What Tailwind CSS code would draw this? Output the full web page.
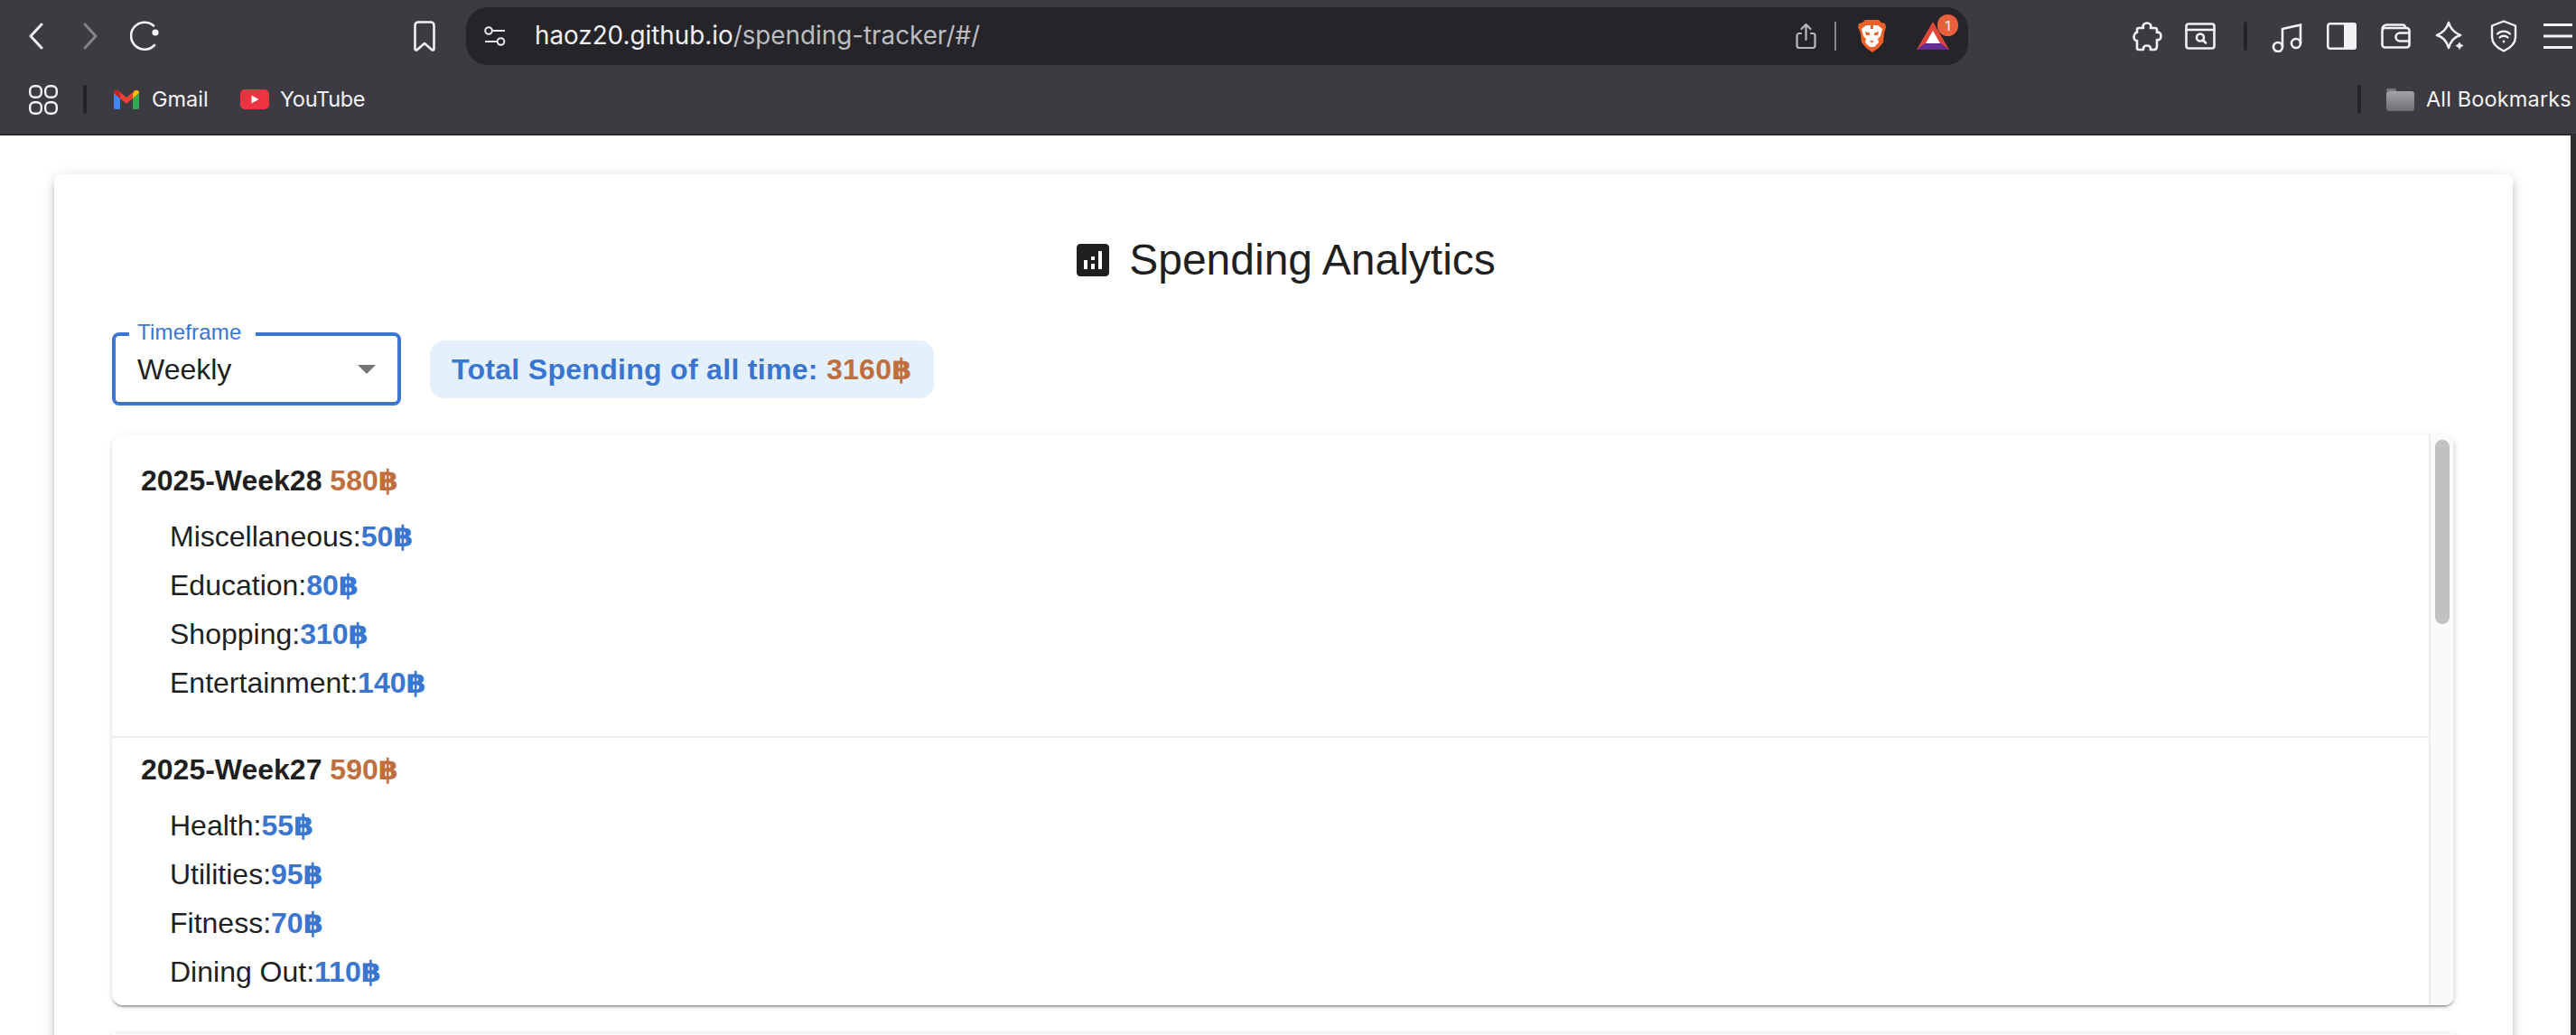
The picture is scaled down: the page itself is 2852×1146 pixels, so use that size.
<!DOCTYPE html>
<html lang="en">
<head>
<meta charset="UTF-8" />
<meta name="viewport" content="width=device-width, initial-scale=1.0" />
<title>Spending Analytics</title>
<script src="https://cdn.jsdelivr.net/npm/@tailwindcss/browser@4"></script>
</head>
<body class="h-[1146px] overflow-hidden bg-white font-['Liberation_Sans','DejaVu_Sans',sans-serif] text-[#1f1f1f]">

<!-- browser toolbar -->
<header class="h-[150px] bg-[#3c3b41] border-b-2 border-[#2a292e] text-[#f2f2f4] font-['Inter',sans-serif]">
    <div class="flex items-center h-[80px] pl-[32px]">
        <svg class="w-[16px] h-[30px]" viewBox="0 0 16 30" fill="none" stroke="#f2f2f4" stroke-width="3" stroke-linecap="round" stroke-linejoin="round"><path d="M14 2 2 15l12 13"/></svg>
        <svg class="w-[16px] h-[30px] ml-[44px]" viewBox="0 0 16 30" fill="none" stroke="#858589" stroke-width="3" stroke-linecap="round" stroke-linejoin="round"><path d="M2 2l12 13L2 28"/></svg>
        <svg class="w-[33px] h-[33px] ml-[36px] mt-[-2px]" viewBox="0 0 33 33" fill="none" stroke="#f2f2f4" stroke-width="2.6" stroke-linecap="round"><path d="M26 5.5A15 15 0 1 0 27 27"/><circle cx="28" cy="13" r="3.6" fill="#f2f2f4" stroke="none"/></svg>
        <svg class="w-[24px] h-[34px] ml-[281px]" viewBox="0 0 24 34" fill="none" stroke="#f2f2f4" stroke-width="2.6" stroke-linejoin="round"><path d="M1.5 5a3.5 3.5 0 0 1 3.5-3.5h14A3.5 3.5 0 0 1 22.5 5v26c0 1.500-1.500 2-2.500 1L12 25l-8 7c-1 1-2.500.5-2.500-1z"/></svg>

        <div class="relative flex items-center w-[1663px] h-[64px] ml-[34px] rounded-[24px] bg-[#252429]">
            <svg class="w-[24px] h-[22px] ml-[20px]" viewBox="0 0 24 22" fill="none" stroke="#e8e8ea" stroke-width="2"><circle cx="5" cy="5" r="3.800"/><path d="M9 5h14M1 17h13"/><circle cx="18.500" cy="17" r="3.800"/></svg>
            <span class="ml-[32px] text-[27.8px] leading-none whitespace-nowrap text-[#f0f0f2]">haoz20.github.io<span class="text-[#bdbdc1]">/spending-tracker/#/</span></span>
            <svg class="w-[23px] h-[30px] ml-auto" viewBox="0 0 23 30" fill="none" stroke="#b9b9bc" stroke-width="2.200" stroke-linecap="round" stroke-linejoin="round"><path d="M6 12H4a2.500 2.500 0 0 0-2.500 2.500v11A2.500 2.500 0 0 0 4 28h15a2.500 2.500 0 0 0 2.500-2.500v-11A2.500 2.500 0 0 0 19 12h-2M11.500 19V2M6.500 7l5-5 5 5"/></svg>
            <div class="w-[2px] h-[32px] ml-[20px] bg-[#87878b]"></div>
            <svg class="w-[31px] h-[36px] ml-[24px]" viewBox="0 0 31 36"><path d="M8 0h15l3 3 4 1 1 4-2 7-1 10-5 6-7 5-7-5-5-6-1-10L0 8l1-4 4-1z" fill="#ee6128"/><path d="M9 6h13l5 4-2 8-3 3 1 4-5 5h-5l-5-5 1-4-3-3-2-8z" fill="#fff"/><path d="M8 13l5 1.500V17H9zM23 13l-5 1.500V17h4zM13 23h5l-2.500 2.500zM15.500 25.500v3M14 6h3v4h-3z" fill="#ee6128"/></svg>
            <div class="relative ml-[34px] mr-[21px] w-[36px] h-[32px]">
                <svg class="w-[36px] h-[32px]" viewBox="0 0 36 32"><path d="M18 0 36 31H0z" fill="#e0473a"/><path d="M0 31 9 24h18l9 7z" fill="#662d91"/><path d="M18 10l8 14H10z" fill="#fff"/></svg>
                <span class="absolute left-[23px] top-[-8px] flex items-center justify-center w-[23px] h-[24px] rounded-full bg-[#e9603f] text-[15px] leading-none text-white">1</span>
            </div>
        </div>

        <svg class="w-[33px] h-[33px] ml-[182px]" viewBox="0 0 33 33" fill="none" stroke="#f2f2f4" stroke-width="2.600" stroke-linejoin="round"><path d="M7 7h5c-1.500-3.500 1.500-5.500 4-5.500s5.500 2 4 5.500h5q2 0 2 2v3c3-1 4.500 1.500 4.500 4s-1.500 5-4.500 4v7q0 4-3 4h-4c.5-3.500-1.500-4.500-4-4.500s-4.500 1-4 4.500H7q-2 0-2-2v-8c-2 .5-3.500-2-3.500-4S3.500 11 5 12V9q0-2 2-2z"/></svg>
        <svg class="w-[34px] h-[30px] ml-[25px]" viewBox="0 0 34 30" fill="none" stroke="#f2f2f4" stroke-width="2.600" stroke-linecap="round"><rect x="1.500" y="1.500" width="31" height="27" rx="2.500"/><path d="M1.500 8h31"/><circle cx="17" cy="16.500" r="4"/><path d="M20 19.500l3 3"/></svg>
        <div class="w-[4px] h-[32px] ml-[31px] rounded-full bg-[#242328]"></div>
        <svg class="w-[34px] h-[33px] ml-[27px] mt-[2px]" viewBox="0 0 34 33" fill="none" stroke="#f2f2f4" stroke-width="2.600"><path d="M12 27V7l20-4.500V23"/><circle cx="7" cy="27" r="5"/><circle cx="27" cy="23" r="5"/></svg>
        <svg class="w-[33px] h-[30px] ml-[27px]" viewBox="0 0 33 30"><rect x="1.300" y="1.300" width="30.400" height="27.400" rx="2.500" fill="none" stroke="#f2f2f4" stroke-width="2.600"/><path d="M19 0h11a3 3 0 0 1 3 3v24a3 3 0 0 1-3 3H19z" fill="#f2f2f4"/></svg>
        <svg class="w-[33px] h-[28px] ml-[27px]" viewBox="0 0 33 28" fill="none" stroke="#f2f2f4" stroke-width="2.600" stroke-linejoin="round"><path d="M1.500 6.500A5 5 0 0 1 6.500 1.500H24q3 0 3 3.500"/><rect x="1.500" y="5" width="30" height="21.500" rx="3"/><path d="M31.500 10.500H21a4.500 4.500 0 0 0 0 9h10.500"/></svg>
        <svg class="w-[33px] h-[34px] ml-[27px]" viewBox="0 0 33 34"><path d="M15 2c2 7 6 11 13 14-7 2-11 7-13 14-2-7-6-12-13-14 7-3 11-7 13-14z" fill="none" stroke="#f2f2f4" stroke-width="2.600" stroke-linejoin="round"/><path d="M27 23.500q1 3 4.500 4-3.500 1.500-4.500 5-1-3.500-4.500-5 3.500-1 4.500-4z" fill="#f2f2f4"/></svg>
        <svg class="w-[30px] h-[36px] ml-[28px]" viewBox="0 0 30 36" fill="none" stroke="#f2f2f4" stroke-width="2.400" stroke-linecap="round" stroke-linejoin="round"><path d="M15 1.500 28 6.500V19c0 7.500-6.500 12.500-13 15.500C8.500 31.500 2 26.500 2 19V6.500z"/><path d="M8 15.500a10 10 0 0 1 14 0M10.500 19.500a6.500 6.500 0 0 1 9 0"/><circle cx="15" cy="24" r="1.400" fill="#f2f2f4" stroke="none"/></svg>
        <svg class="w-[32px] h-[30px] ml-[29px]" viewBox="0 0 32 30" stroke="#f2f2f4" stroke-width="2.800"><path d="M0 2.500h32M0 15h32M0 27.500h32"/></svg>
    </div>

    <div class="flex items-center h-[60px] pl-[32px] pr-[6px] text-[23.5px] leading-none whitespace-nowrap">
        <svg class="w-[32px] h-[33px]" viewBox="0 0 32 33" fill="none" stroke="#f2f2f4" stroke-width="2.400"><rect x="1.200" y="1.200" width="12.600" height="12.600" rx="5"/><rect x="18.200" y="1.200" width="12.600" height="12.600" rx="5"/><rect x="1.200" y="19.200" width="12.600" height="12.600" rx="5"/><rect x="18.200" y="19.200" width="12.600" height="12.600" rx="5"/></svg>
        <div class="w-[4px] h-[32px] ml-[28px] rounded-full bg-[#242328]"></div>
        <svg class="w-[28px] h-[21px] ml-[30px]" viewBox="0 0 28 21"><path d="M0 3v16a2 2 0 0 0 2 2h5V9z" fill="#4285f4"/><path d="M21 9v12h5a2 2 0 0 0 2-2V3z" fill="#34a853"/><path d="M0 3C0 0 3-1 5 .5L14 8 23 .5C25-1 28 0 28 3l-7 6-7 6-7-6z" fill="#ea4335"/><path d="M21 4l2-3.500C25-1 28 0 28 3l-7 6z" fill="#fbbc04"/><path d="M0 3c0-3 3-4 5-2.500L7 3v6z" fill="#c5221f"/></svg>
        <span class="ml-[14px] w-[63px]">Gmail</span>
        <svg class="w-[32px] h-[22px] ml-[35px]" viewBox="0 0 32 22"><rect width="32" height="22" rx="5" fill="#ed3241"/><path d="M12.500 6.500v9l8-4.500z" fill="#fff"/></svg>
        <span class="ml-[12px] tracking-[-0.3px]">YouTube</span>
        <div class="w-[4px] h-[32px] ml-auto rounded-full bg-[#242328]"></div>
        <svg class="w-[31px] h-[25px] ml-[28px]" viewBox="0 0 31 25"><defs><linearGradient id="folderFill" x1="0" y1="0" x2="0" y2="1"><stop offset="0" stop-color="#a3a3a6"/><stop offset="1" stop-color="#6e6e72"/></linearGradient></defs><path d="M0 2a2 2 0 0 1 2-2h7a2 2 0 0 1 2 2v1H0z" fill="#77777b"/><rect y="3" width="31" height="22" rx="3" fill="url(#folderFill)"/></svg>
        <span class="ml-[13px] w-[160px] tracking-[0.15px]">All Bookmarks</span>
    </div>
</header>

<div class="flex h-[996px]">
    <main class="flex-1 min-w-0 overflow-hidden pl-[60px] pr-[64px] pt-[43px]">
        <section class="bg-white rounded-t-[8px] px-[64px] pt-[63px] h-[1200px] shadow-[0_6px_6px_-4px_rgba(0,0,0,0.2),0_6px_8px_0_rgba(0,0,0,0.14),0_2px_16px_0_rgba(0,0,0,0.12)]">
            <h2 class="flex items-center justify-center text-[48px] leading-[64px]">
                <svg class="w-[48px] h-[48px] mr-[16px]" viewBox="0 0 24 24" fill="#1f1f1f"><path d="M19 3H5c-1.100 0-2 .9-2 2v14c0 1.100.9 2 2 2h14c1.100 0 2-.9 2-2V5c0-1.100-.9-2-2-2M9 17H7v-5h2zm4 0h-2v-3h2zm0-5h-2v-2h2zm4 5h-2V7h2z"/></svg>
                Spending Analytics
            </h2>

            <div class="flex items-center gap-[32px] mt-[48px]">
                <div class="relative flex items-center justify-between w-[320px] h-[81px] pl-[24px] pr-[24px] border-4 border-[#3a75cf] rounded-[8px] text-[32px]">
                    <span class="absolute left-[15px] top-[-18px] pl-[9px] pr-[15px] bg-white text-[24px] leading-[28px] tracking-[0.2px] text-[#3a75cf]">Timeframe</span>
                    <span>Weekly</span>
                    <span class="w-0 h-0 border-x-[10px] border-t-[10px] border-x-transparent border-t-[#757575]"></span>
                </div>
                <div class="flex items-center h-[64px] px-[24px] rounded-[16px] bg-[#e4f1fc] text-[32px] font-bold tracking-[0.3px] text-[#3a75cf]">
                    <span>Total Spending of all time: <span class="text-[#bf6f3f]">3160฿</span></span>
                </div>
            </div>

            <div class="flex h-[632px] mt-[32px] rounded-[12px] overflow-hidden bg-white shadow-[0_4px_2px_-2px_rgba(0,0,0,0.2),0_2px_2px_0_rgba(0,0,0,0.14),0_2px_6px_0_rgba(0,0,0,0.12)]">
                <div class="flex-1 min-w-0 text-[32px]">
                    <div class="pt-[27px] h-[336px] border-b-2 border-[#ececec]">
                        <p class="pl-[32px] leading-[48px] font-bold">2025-Week28 <span class="text-[#bf6f3f]">580฿</span></p>
                        <ul class="mt-[11px] pl-[64px] leading-[54px]">
                            <li>Miscellaneous:<b class="text-[#3a75cf]">50฿</b></li>
                            <li>Education:<b class="text-[#3a75cf]">80฿</b></li>
                            <li>Shopping:<b class="text-[#3a75cf]">310฿</b></li>
                            <li>Entertainment:<b class="text-[#3a75cf]">140฿</b></li>
                        </ul>
                    </div>
                    <div class="pt-[11px]">
                        <p class="pl-[32px] leading-[48px] font-bold">2025-Week27 <span class="text-[#bf6f3f]">590฿</span></p>
                        <ul class="mt-[11px] pl-[64px] leading-[54px]">
                            <li>Health:<b class="text-[#3a75cf]">55฿</b></li>
                            <li>Utilities:<b class="text-[#3a75cf]">95฿</b></li>
                            <li>Fitness:<b class="text-[#3a75cf]">70฿</b></li>
                            <li>Dining Out:<b class="text-[#3a75cf]">110฿</b></li>
                        </ul>
                    </div>
                </div>
                <div class="w-[29px] pt-[6px] pl-[5px] border-x-2 border-[#ebebeb] bg-[#fafafa]">
                    <div class="w-[16px] h-[204px] rounded-[8px] bg-[#c1c1c1]"></div>
                </div>
            </div>

            <div class="h-[300px] mt-[32px] bg-white shadow-[0_0_6px_0_rgba(0,0,0,0.12)]"></div>
        </section>
    </main>
    <div class="w-[6px] bg-[#2d2d2d]"></div>
</div>

</body>
</html>
